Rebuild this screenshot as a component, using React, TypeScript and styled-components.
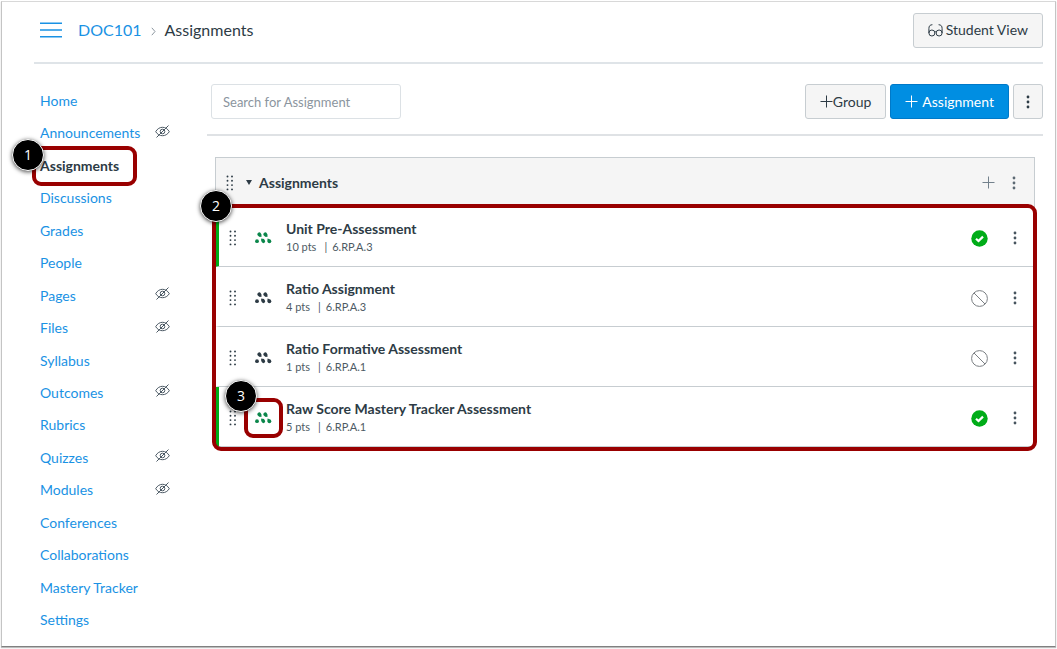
import React from "react";
import styled, { createGlobalStyle, css } from "styled-components";

const GlobalStyle = createGlobalStyle`
  *, *::before, *::after { box-sizing: border-box; }
  body {
    margin: 0;
    background: #fff;
    color: #2d3b45;
    font-family: Lato, "Liberation Sans", sans-serif;
    font-size: 14px;
    line-height: 20px;
  }
  button, input { font: inherit; color: inherit; }
  ul { list-style: none; margin: 0; padding: 0; }
  h1, h2, h3, p { margin: 0; }
  svg { display: block; flex: none; }
`;

const Frame = styled.div`
  display: flex;
  flex-direction: column;
  min-height: calc(100vh - 3px);
  margin: 1px 1px 2px;
  padding: 0 12px 10px 32px;
  border: 1px solid #c4c4c4;
  border-top-color: #d8d8d8;
  border-bottom-color: #808080;
  box-shadow: 0 1px 1px #bdbdbd;
`;

const Header = styled.header`
  display: flex;
  align-items: center;
  justify-content: space-between;
  height: 62px;
  padding-bottom: 4px;
  border-bottom: 2px solid #dfe4e8;
`;

const Crumbs = styled.nav`
  display: flex;
  align-items: center;
  font-size: 16px;
  padding-left: 6px;
`;

const PlainButton = styled.button`
  display: flex;
  align-items: center;
  justify-content: center;
  padding: 0;
  border: 0;
  background: none;
  cursor: pointer;
`;

const MenuButton = styled(PlainButton)`
  margin-right: 16px;
`;

const CrumbLink = styled.a`
  color: #1a92e4;
  text-decoration: none;
`;

const CrumbArrow = styled.svg`
  margin: 2px 9px 0;
`;

const Button = styled.button<{ $gap?: number; $primary?: boolean; $icon?: boolean }>`
  display: flex;
  align-items: center;
  justify-content: center;
  gap: ${(p) => p.$gap ?? 0}px;
  height: 35px;
  padding: ${(p) => (p.$icon ? "0" : "0 14px")};
  width: ${(p) => (p.$icon ? "30px" : "auto")};
  border: 1px solid #c7cdd1;
  border-radius: 3px;
  background: #f5f5f5;
  white-space: nowrap;
  cursor: pointer;
  ${(p) =>
    p.$primary &&
    css`
      border-color: #0079c8;
      background: #008ee2;
      color: #fff;
    `}
`;

const Body = styled.div`
  display: flex;
  flex: 1;
`;

const SideNav = styled.nav`
  flex: none;
  width: 173px;
  padding: 27px 0 6px;
`;

const NavList = styled.ul`
  display: flex;
  flex-direction: column;
  justify-content: space-between;
  height: 100%;
`;

const NavItem = styled.li`
  position: relative;
  display: flex;
  align-items: center;
  justify-content: space-between;
  padding: 0 37px 0 6px;
`;

const NavLink = styled.a<{ $current?: boolean }>`
  color: ${(p) => (p.$current ? "#2d3b45" : "#1a92e4")};
  font-weight: ${(p) => (p.$current ? 700 : 400)};
  text-decoration: none;
`;

const EyeIcon = styled.svg`
  margin-bottom: 4px;
`;

const Main = styled.main`
  flex: 1;
  min-width: 0;
`;

const Toolbar = styled.div`
  display: flex;
  align-items: center;
  gap: 4px;
  height: 72px;
  padding: 20px 0 15px 4px;
  border-bottom: 2px solid #dfe2e5;
`;

const Search = styled.input`
  width: 190px;
  height: 35px;
  margin-right: auto;
  padding: 0 11px;
  border: 1px solid #dce1e5;
  border-radius: 3px;
  background: #fff;
  font-size: 13px;
  &::placeholder { color: #8b959e; opacity: 1; }
`;

const Group = styled.section`
  margin: 21px 8px 0;
`;

const GroupHeader = styled.header`
  display: flex;
  align-items: center;
  height: 50px;
  padding: 0 15px 0 10px;
  border: 1px solid #c7cdd1;
  border-bottom: 0;
  background: #f5f5f5;
`;

const GroupTitle = styled.h2`
  flex: 1;
  font-size: 14px;
  font-weight: 700;
`;

const Caret = styled(PlainButton)`
  margin: 0 7px 0 12px;
`;

const GroupBody = styled.div`
  position: relative;
`;

const Row = styled.li<{ $published: boolean }>`
  display: flex;
  align-items: center;
  height: 60px;
  padding: 3px 15px 0 10px;
  border-left: 4px solid ${(p) => (p.$published ? "#00ac18" : "transparent")};
  border-bottom: 1px solid #c7cdd1;
`;

const TypeIcon = styled.span`
  position: relative;
  display: flex;
  margin: 0 14px 0 18px;
`;

const RowText = styled.div`
  flex: 1;
  padding-bottom: 2px;
`;

const RowTitle = styled.h3`
  font-size: 14px;
  line-height: 20px;
  font-weight: 700;
`;

const RowMeta = styled.p`
  display: flex;
  gap: 5px;
  font-size: 11px;
  line-height: 16px;
  color: #4d5a64;
`;

const Points = styled.span`
  margin-right: 3px;
`;

const IconButton = styled(PlainButton)<{ $space: number }>`
  width: 18px;
  margin-right: ${(p) => p.$space}px;
`;

const KebabButton = styled(PlainButton)`
  width: 10px;
  height: 20px;
`;

const Highlight = styled.span<{ $inset: string }>`
  position: absolute;
  inset: ${(p) => p.$inset};
  border: 4px solid #990000;
  border-radius: 9px;
  pointer-events: none;
`;

const Badge = styled.span<{ $top: number; $left: number }>`
  position: absolute;
  top: ${(p) => p.$top}px;
  left: ${(p) => p.$left}px;
  display: flex;
  align-items: center;
  justify-content: center;
  width: 32px;
  height: 32px;
  border: 1px solid #fff;
  border-radius: 50%;
  background: #000;
  box-shadow: 0 1px 4px rgba(0, 0, 0, 0.7);
  color: #fff;
  font-family: "Open Sans", "Noto Sans", sans-serif;
  font-size: 14px;
  font-weight: 400;
`;

const Dots = ({ color = "#2d3b45" }: { color?: string }) => (
  <svg width="4" height="14" viewBox="0 0 4 14" fill={color} aria-hidden="true">
    <circle cx="2" cy="2" r="1.4" />
    <circle cx="2" cy="7" r="1.4" />
    <circle cx="2" cy="12" r="1.4" />
  </svg>
);

const Grip = () => (
  <svg width="8" height="16" viewBox="0 0 8 16" fill="#2d3b45" aria-hidden="true">
    {[1.5, 5.8, 10.1, 14.4].map((y) => (
      <React.Fragment key={y}>
        <circle cx="1.5" cy={y} r="0.95" />
        <circle cx="6" cy={y} r="0.95" />
      </React.Fragment>
    ))}
  </svg>
);

const Plus = ({ color }: { color: string }) => (
  <svg width="13" height="13" viewBox="0 0 13 13" stroke={color} strokeWidth="1" aria-hidden="true">
    <path d="M6.5 0.5v12M0.5 6.5h12" />
  </svg>
);

const Mastery = ({ color }: { color: string }) => (
  <svg width="17" height="12" viewBox="0 0 17 12" fill={color} aria-hidden="true">
    <ellipse cx="4.4" cy="2.5" rx="1.9" ry="2.1" transform="rotate(-35 4.4 2.5)" />
    <ellipse cx="10.4" cy="2.5" rx="1.9" ry="2.1" transform="rotate(-35 10.4 2.5)" />
    <path d="M4 4.400l2.300-1.600.2 2.200zM10 4.400l2.300-1.600.2 2.200z" />
    <circle cx="2" cy="9.200" r="1.900" />
    <ellipse cx="8.200" cy="9" rx="1.800" ry="2.200" transform="rotate(-35 8.200 9)" />
    <path d="M6.200 8.800V6.500l2.300.6z" />
    <ellipse cx="14.400" cy="9.200" rx="1.900" ry="2" />
    <path d="M12.500 9.200V6.600l2.400.7z" />
  </svg>
);

const HiddenEye = () => (
  <EyeIcon width="15" height="13" viewBox="0 0 15 13" fill="none" stroke="#4a5863" strokeWidth="1" role="img" aria-label="Hidden from students">
    <path d="M.7 6.700C2.400 3.700 4.800 2.300 7.500 2.300s5.100 1.400 6.800 4.400c-1.700 2.700-4.100 4-6.800 4S2.400 9.400.7 6.700z" />
    <circle cx="7.500" cy="6.500" r="2.300" />
    <path d="M13.500.5L1.500 12.500" />
  </EyeIcon>
);

const Glasses = () => (
  <svg width="15" height="13" viewBox="0 0 15 13" fill="none" stroke="#2d3b45" strokeWidth="1" aria-hidden="true">
    <circle cx="3.900" cy="9" r="3" />
    <circle cx="11.100" cy="9" r="3" />
    <path d="M.9 9V4.500C.9 2 2 .8 4.400.7M14.100 9V4.500C14.100 2 13 .8 10.600.7M6.700 8c.4-.5 1.200-.5 1.600 0" />
  </svg>
);

const Published = () => (
  <svg width="17" height="17" viewBox="0 0 17 17" role="img" aria-label="Published">
    <circle cx="8.500" cy="8.500" r="8.200" fill="#00ac18" />
    <path d="M5 8.700l2.500 2.300 4.500-4.400" fill="none" stroke="#fff" strokeWidth="2.200" />
  </svg>
);

const Unpublished = () => (
  <svg width="17" height="17" viewBox="0 0 17 17" fill="none" stroke="#7b7f83" strokeWidth="1" role="img" aria-label="Unpublished">
    <circle cx="8.500" cy="8.500" r="7.900" />
    <path d="M3 3l11 11" />
  </svg>
);

type Link = { label: string; hidden?: boolean; current?: boolean };

const links: Link[] = [
  { label: "Home" },
  { label: "Announcements", hidden: true },
  { label: "Assignments", current: true },
  { label: "Discussions" },
  { label: "Grades" },
  { label: "People" },
  { label: "Pages", hidden: true },
  { label: "Files", hidden: true },
  { label: "Syllabus" },
  { label: "Outcomes", hidden: true },
  { label: "Rubrics" },
  { label: "Quizzes", hidden: true },
  { label: "Modules", hidden: true },
  { label: "Conferences" },
  { label: "Collaborations" },
  { label: "Mastery Tracker" },
  { label: "Settings" },
];

type Assignment = { title: string; points: number; standard: string; published: boolean; marked?: boolean };

const assignments: Assignment[] = [
  { title: "Unit Pre-Assessment", points: 10, standard: "6.RP.A.3", published: true },
  { title: "Ratio Assignment", points: 4, standard: "6.RP.A.3", published: false },
  { title: "Ratio Formative Assessment", points: 1, standard: "6.RP.A.1", published: false },
  { title: "Raw Score Mastery Tracker Assessment", points: 5, standard: "6.RP.A.1", published: true, marked: true },
];

export default function App() {
  return (
    <>
      <GlobalStyle />
      <Frame>
        <Header>
          <Crumbs aria-label="Breadcrumb">
            <MenuButton aria-label="Course navigation">
              <svg width="22" height="16" viewBox="0 0 22 16" stroke="#1a92e4" strokeWidth="1.500" aria-hidden="true">
                <path d="M0 1.200h22M0 8h22M0 14.800h22" />
              </svg>
            </MenuButton>
            <CrumbLink href="#course">DOC101</CrumbLink>
            <CrumbArrow width="5" height="9" viewBox="0 0 5 9" fill="none" stroke="#8b959e" aria-hidden="true">
              <path d="M.8.8l3.200 3.700L.8 8.200" />
            </CrumbArrow>
            <span>Assignments</span>
          </Crumbs>
          <Button $gap={3}>
            <Glasses />
            Student View
          </Button>
        </Header>
        <Body>
          <SideNav aria-label="Course">
            <NavList>
              {links.map((link) => (
                <NavItem key={link.label}>
                  <NavLink href={`#${link.label}`} $current={link.current}>
                    {link.label}
                  </NavLink>
                  {link.hidden && <HiddenEye />}
                  {link.current && (
                    <Highlight $inset="-10px 70px -10px -2px">
                      <Badge $top={-11} $left={-24}>1</Badge>
                    </Highlight>
                  )}
                </NavItem>
              ))}
            </NavList>
          </SideNav>
          <Main>
            <Toolbar>
              <Search type="text" placeholder="Search for Assignment" aria-label="Search for Assignment" />
              <Button>
                <Plus color="#2d3b45" />
                Group
              </Button>
              <Button $primary $gap={4}>
                <Plus color="#fff" />
                Assignment
              </Button>
              <Button $icon aria-label="Assignment settings">
                <Dots />
              </Button>
            </Toolbar>
            <Group>
              <GroupHeader>
                <Grip />
                <Caret aria-label="Collapse group">
                  <svg width="6" height="5" viewBox="0 0 6 5" fill="#2d3b45" aria-hidden="true">
                    <path d="M0 0h6L3 5z" />
                  </svg>
                </Caret>
                <GroupTitle>Assignments</GroupTitle>
                <IconButton $space={12} aria-label="Add assignment to group">
                  <Plus color="#73818c" />
                </IconButton>
                <KebabButton aria-label="Group options">
                  <Dots color="#5c6973" />
                </KebabButton>
              </GroupHeader>
              <GroupBody>
                <ul>
                  {assignments.map((item) => (
                    <Row key={item.title} $published={item.published}>
                      <Grip />
                      <TypeIcon>
                        <Mastery color={item.published ? "#0b874b" : "#2d3b45"} />
                        {item.marked && (
                          <Highlight $inset="-14px -11px -14px -11px">
                            <Badge $top={-22} $left={-23}>3</Badge>
                          </Highlight>
                        )}
                      </TypeIcon>
                      <RowText>
                        <RowTitle>{item.title}</RowTitle>
                        <RowMeta>
                          <Points>{item.points} pts</Points>
                          <span>|</span>
                          <span>{item.standard}</span>
                        </RowMeta>
                      </RowText>
                      <IconButton $space={22} aria-label={item.published ? "Published" : "Unpublished"}>
                        {item.published ? <Published /> : <Unpublished />}
                      </IconButton>
                      <KebabButton aria-label={`Options for ${item.title}`}>
                        <Dots color="#47545e" />
                      </KebabButton>
                    </Row>
                  ))}
                </ul>
                <Highlight $inset="-3px -2px -4px -3px">
                  <Badge $top={-18} $left={-16}>2</Badge>
                </Highlight>
              </GroupBody>
            </Group>
          </Main>
        </Body>
      </Frame>
    </>
  );
}
